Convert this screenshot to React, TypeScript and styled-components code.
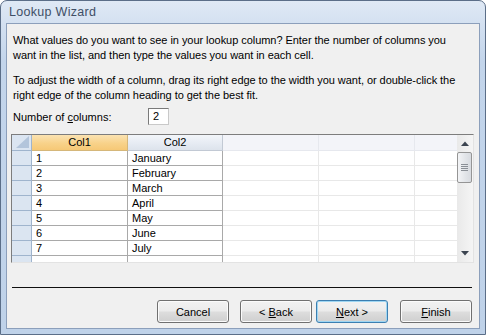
import React from 'react'
import styled, { createGlobalStyle } from 'styled-components'

const GlobalStyle = createGlobalStyle`
  html, body {
    margin: 0;
    padding: 0;
    background: #ffffff;
  }
  * {
    box-sizing: border-box;
  }
`

const UI_FONT = `'Liberation Sans', Arial, sans-serif`

const Window = styled.div`
  width: 486px;
  height: 335px;
  display: flex;
  flex-direction: column;
  border: 1px solid #5b6e88;
  border-radius: 7px 7px 0 0;
  background: linear-gradient(180deg, #dfe9f5 0px, #d4e1f1 22px, #c3d5eb 60px, #bfd2e9 100%);
  font-family: ${UI_FONT};
  overflow: hidden;
`

const TitleBar = styled.div`
  height: 22px;
  display: flex;
  align-items: center;
  padding-left: 8px;
  font-size: 12.5px;
  color: #3f4f66;
  letter-spacing: 0.3px;
`

const Client = styled.div`
  flex: 1;
  margin: 0 5px 5px 5px;
  border: 1px solid #8c9fbb;
  background: #f0f0f0;
  display: flex;
  flex-direction: column;
  padding: 9px 0 0 4px;
  font-size: 11px;
  color: #000;
`

const Para = styled.p`
  margin: 0 0 10px 2px;
  line-height: 15px;
  letter-spacing: -0.05px;
`

const CountRow = styled.div`
  display: flex;
  align-items: center;
  height: 17px;
  margin: -5px 0 0 2px;
`

const CountLabel = styled.span`
  width: 135px;
`

const CountBox = styled.div`
  width: 21px;
  height: 17px;
  border: 1px solid #7a7a7a;
  border-right-color: #c9c9c9;
  border-bottom-color: #c9c9c9;
  background: #fff;
  padding-left: 4px;
  line-height: 15px;
`

const Grid = styled.div`
  margin-top: 9px;
  width: 463px;
  height: 129px;
  border: 1px solid #e3e3e3;
  border-top-color: #7d7d7d;
  border-left-color: #7d7d7d;
  background: #fff;
  display: flex;
`

const Sheet = styled.div`
  flex: 1;
  overflow: hidden;
  display: flex;
  flex-direction: column;
`

const Row = styled.div<{ $header?: boolean }>`
  display: flex;
  flex: none;
  height: ${p => (p.$header ? 16 : 15)}px;
`

const widths = [20, 96, 95, 96, 96, 96]

type CellKind = 'corner' | 'selector' | 'active' | 'head' | 'blankHead' | 'data' | 'blank'

const cellBg: Record<CellKind, string> = {
  corner: '#dbe5f1',
  selector: '#dbe5f1',
  active: 'linear-gradient(180deg, #fbe3b2 0%, #f8d28a 55%, #f6c876 100%)',
  head: 'linear-gradient(180deg, #f3f6fa 0%, #e6ebf3 55%, #dde3ec 100%)',
  blankHead: '#f3f4f9',
  data: '#ffffff',
  blank: '#ffffff',
}

const cellLine: Record<CellKind, string> = {
  corner: '#9fb4cd',
  selector: '#9fb4cd',
  active: '#d5b77a',
  head: '#c2c9d4',
  blankHead: '#e6e8ee',
  data: '#a9a9a9',
  blank: '#e8e8e8',
}

const Cell = styled.div<{ $kind: CellKind; $w: number }>`
  flex: none;
  width: ${p => p.$w}px;
  height: 100%;
  background: ${p => cellBg[p.$kind]};
  border-right: 1px solid ${p => cellLine[p.$kind]};
  border-bottom: 1px solid ${p => cellLine[p.$kind]};
  padding-left: ${p => (p.$kind === 'data' ? 4 : 0)}px;
  text-align: ${p => (p.$kind === 'active' || p.$kind === 'head' ? 'center' : 'left')};
  line-height: 14px;
  white-space: nowrap;
  overflow: hidden;
`

const CornerMark = styled.svg`
  display: block;
  margin: 1px 0 0 4px;
`

const ScrollBar = styled.div`
  width: 16px;
  flex: none;
  background: linear-gradient(90deg, #e9e9e9, #f5f5f5);
  display: flex;
  flex-direction: column;
  align-items: center;
`

const ArrowBtn = styled.div`
  height: 17px;
  width: 16px;
  display: flex;
  align-items: center;
  justify-content: center;
`

const Thumb = styled.div`
  width: 15px;
  height: 31px;
  margin-left: -1px;
  border: 1px solid #959595;
  border-radius: 2px;
  background: linear-gradient(90deg, #f3f4f6, #e1e4e8 60%, #d8dbe0);
  display: flex;
  flex-direction: column;
  align-items: center;
  justify-content: center;
  gap: 1px;
`

const Grip = styled.span`
  width: 7px;
  height: 1px;
  background: #8a8f96;
`

const Spacer = styled.div`
  flex: 1;
`

const Separator = styled.div`
  margin: 24px 0 0 1px;
  width: 460px;
  height: 1px;
  background: #101010;
`

const ButtonRow = styled.div`
  display: flex;
  margin: 12px 0 0 146px;
`

const Button = styled.div<{ $focused?: boolean; $gap?: number }>`
  width: 72px;
  height: 23px;
  margin-left: ${p => p.$gap ?? 0}px;
  display: flex;
  align-items: center;
  justify-content: center;
  white-space: pre;
  border: 1px solid ${p => (p.$focused ? '#3c7fb1' : '#707070')};
  border-radius: 3px;
  background: linear-gradient(180deg, #f2f2f2 0%, #ebebeb 48%, #dddddd 52%, #cfcfcf 100%);
  box-shadow: inset 0 0 0 1px ${p => (p.$focused ? '#9fd6f2' : '#fbfbfb')};
  font-size: 11px;
  color: #000;
`

const Key = styled.span`
  text-decoration: underline;
`

const months = ['January', 'February', 'March', 'April', 'May', 'June', 'July', '']

const Triangle = ({ up }: { up?: boolean }) => (
  <svg width="8" height="5" viewBox="0 0 8 5">
    <path d={up ? 'M0 5 L4 0.5 L8 5 Z' : 'M0 0 L4 4.5 L8 0 Z'} fill="#3c4450" />
  </svg>
)

const App: React.FC = () => {
  return (
    <>
      <GlobalStyle />
      <Window>
        <TitleBar>Lookup Wizard</TitleBar>
        <Client>
          <Para>
            What values do you want to see in your lookup column? Enter the number of columns you
            <br />
            want in the list, and then type the values you want in each cell.
          </Para>
          <Para>
            To adjust the width of a column, drag its right edge to the width you want, or double-click the
            <br />
            right edge of the column heading to get the best fit.
          </Para>
          <CountRow>
            <CountLabel>
              Number of <Key>c</Key>olumns:
            </CountLabel>
            <CountBox>2</CountBox>
          </CountRow>
          <Grid>
            <Sheet>
              <Row $header>
                <Cell $kind="corner" $w={widths[0]}>
                  <CornerMark width="13" height="12" viewBox="0 0 13 12">
                    <path d="M13 0 L13 12 L0 12 Z" fill="#b3c5db" />
                  </CornerMark>
                </Cell>
                <Cell $kind="active" $w={widths[1]}>Col1</Cell>
                <Cell $kind="head" $w={widths[2]}>Col2</Cell>
                <Cell $kind="blankHead" $w={widths[3]} />
                <Cell $kind="blankHead" $w={widths[4]} />
                <Cell $kind="blankHead" $w={widths[5]} />
              </Row>
              {months.map((m, i) => (
                <Row key={i}>
                  <Cell $kind="selector" $w={widths[0]} />
                  <Cell $kind="data" $w={widths[1]}>{m ? i + 1 : ''}</Cell>
                  <Cell $kind="data" $w={widths[2]}>{m}</Cell>
                  <Cell $kind="blank" $w={widths[3]} />
                  <Cell $kind="blank" $w={widths[4]} />
                  <Cell $kind="blank" $w={widths[5]} />
                </Row>
              ))}
            </Sheet>
            <ScrollBar>
              <ArrowBtn>
                <Triangle up />
              </ArrowBtn>
              <Thumb>
                <Grip />
                <Grip />
                <Grip />
                <Grip />
              </Thumb>
              <Spacer />
              <ArrowBtn>
                <Triangle />
              </ArrowBtn>
            </ScrollBar>
          </Grid>
          <Separator />
          <ButtonRow>
            <Button>Cancel</Button>
            <Button $gap={11}>
              {'< '}
              <Key>B</Key>ack
            </Button>
            <Button $gap={4} $focused>
              <Key>N</Key>
              {'ext >'}
            </Button>
            <Button $gap={12}>
              <Key>F</Key>inish
            </Button>
          </ButtonRow>
        </Client>
      </Window>
    </>
  )
}

export default App
